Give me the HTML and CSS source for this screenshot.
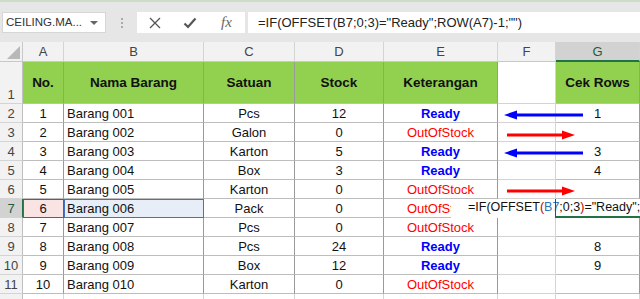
FILE: index.html
```html
<!DOCTYPE html>
<html lang="id">
<head>
  <meta charset="UTF-8">
  <title>Cek Rows</title>
  <link rel="stylesheet" href="styles.css">
</head>
<body>
  <div class="toolbar">
    <div class="namebox">CEILING.MA...<span class="caret"></span></div>
    <div class="grip"><i></i><i></i><i></i></div>
    <div class="fbtns">
      <svg class="ico-x" width="12" height="12" viewBox="0 0 12 12"><path d="M1 1L11 11M11 1L1 11" stroke="#555" stroke-width="1.3" fill="none"/></svg>
      <svg class="ico-ok" width="14" height="12" viewBox="0 0 14 12"><path d="M1.5 6.5L5 10L12.5 1.5" stroke="#555" stroke-width="2.2" fill="none"/></svg>
      <span class="fx">fx</span>
    </div>
    <div class="finput">=IF(OFFSET(B7;0;3)="Ready";ROW(A7)-1;"")</div>
  </div>

  <div class="sheet">
    <div class="corner"></div>
    <div class="ch">A</div><div class="ch">B</div><div class="ch">C</div><div class="ch">D</div>
    <div class="ch">E</div><div class="ch">F</div><div class="ch active-col">G</div>

    <div class="rh">1</div>
    <div class="cell t g">No.</div><div class="cell t g">Nama Barang</div><div class="cell t g">Satuan</div>
    <div class="cell t g">Stock</div><div class="cell t g">Keterangan</div><div class="cell"></div><div class="cell t g">Cek Rows</div>

    <div class="rh">2</div>
    <div class="cell t">1</div><div class="cell t left">Barang 001</div><div class="cell t">Pcs</div>
    <div class="cell t">12</div><div class="cell t ready">Ready</div><div class="cell"></div><div class="cell t">1</div>

    <div class="rh">3</div>
    <div class="cell t">2</div><div class="cell t left">Barang 002</div><div class="cell t">Galon</div>
    <div class="cell t">0</div><div class="cell t out">OutOfStock</div><div class="cell"></div><div class="cell t"></div>

    <div class="rh">4</div>
    <div class="cell t">3</div><div class="cell t left">Barang 003</div><div class="cell t">Karton</div>
    <div class="cell t">5</div><div class="cell t ready">Ready</div><div class="cell"></div><div class="cell t">3</div>

    <div class="rh">5</div>
    <div class="cell t">4</div><div class="cell t left">Barang 004</div><div class="cell t">Box</div>
    <div class="cell t">3</div><div class="cell t ready">Ready</div><div class="cell"></div><div class="cell t">4</div>

    <div class="rh">6</div>
    <div class="cell t">5</div><div class="cell t left">Barang 005</div><div class="cell t">Karton</div>
    <div class="cell t">0</div><div class="cell t out">OutOfStock</div><div class="cell"></div><div class="cell t"></div>

    <div class="rh active-row">7</div>
    <div class="cell t ref-a">6</div><div class="cell t left ref-b">Barang 006</div><div class="cell t">Pack</div>
    <div class="cell t">0</div><div class="cell t out">OutOfStock</div><div class="cell"></div><div class="cell t"></div>

    <div class="rh">8</div>
    <div class="cell t">7</div><div class="cell t left">Barang 007</div><div class="cell t">Pcs</div>
    <div class="cell t">0</div><div class="cell t out">OutOfStock</div><div class="cell"></div><div class="cell t"></div>

    <div class="rh">9</div>
    <div class="cell t">8</div><div class="cell t left">Barang 008</div><div class="cell t">Pcs</div>
    <div class="cell t">24</div><div class="cell t ready">Ready</div><div class="cell"></div><div class="cell t">8</div>

    <div class="rh">10</div>
    <div class="cell t">9</div><div class="cell t left">Barang 009</div><div class="cell t">Box</div>
    <div class="cell t">12</div><div class="cell t ready">Ready</div><div class="cell"></div><div class="cell t">9</div>

    <div class="rh">11</div>
    <div class="cell t">10</div><div class="cell t left">Barang 010</div><div class="cell t">Karton</div>
    <div class="cell t">0</div><div class="cell t out">OutOfStock</div><div class="cell"></div><div class="cell t"></div>

    <div class="rh"></div>
    <div class="cell"></div><div class="cell"></div><div class="cell"></div>
    <div class="cell"></div><div class="cell"></div><div class="cell"></div><div class="cell"></div>

    <!-- arrows drawn over column F -->
    <svg class="arrow arrow-r2" width="80" height="12" viewBox="0 0 80 12"><path d="M10 6H79" stroke="#0000ff" stroke-width="3"/><path d="M0 6L13 1.5V10.5Z" fill="#0000ff"/></svg>
    <svg class="arrow arrow-r3" width="68" height="12" viewBox="0 0 68 12"><path d="M0 6H58" stroke="#ff0000" stroke-width="3"/><path d="M68 6L55 1.5V10.5Z" fill="#ff0000"/></svg>
    <svg class="arrow arrow-r4" width="80" height="12" viewBox="0 0 80 12"><path d="M10 6H79" stroke="#0000ff" stroke-width="3"/><path d="M0 6L13 1.5V10.5Z" fill="#0000ff"/></svg>
    <svg class="arrow arrow-r6" width="68" height="12" viewBox="0 0 68 12"><path d="M0 6H58" stroke="#ff0000" stroke-width="3"/><path d="M68 6L55 1.5V10.5Z" fill="#ff0000"/></svg>

    <!-- cell G7 in edit mode -->
    <div class="edit">=IF(OFFSET<span class="paren">(</span><span class="ref">B7</span>;0;3<span class="paren">)</span>="Ready";</div>
  </div>
</body>
</html>
```

FILE: styles.css
```css
body {
  margin: 0;
  width: 640px;
  height: 299px;
  overflow: hidden;
  background: #ffffff;
  font-family: "Liberation Sans", Arial, sans-serif;
  color: #111;
}

/* formula bar */
.toolbar {
  height: 42px;
  box-sizing: border-box;
  background: #e6e6e6;
  border-top: 2px solid #cddbc9;
  padding-top: 10px;
  display: flex;
  align-items: flex-start;
}
.namebox {
  position: relative;
  margin-left: 2px;
  width: 104px;
  height: 21px;
  box-sizing: border-box;
  background: #fff;
  border: 1px solid #d6d6d6;
  padding-left: 3px;
  font-size: 11.5px;
  line-height: 19px;
  color: #333;
}
.caret {
  position: absolute;
  right: 7px;
  top: 8px;
  border-left: 4px solid transparent;
  border-right: 4px solid transparent;
  border-top: 4px solid #666;
}
.grip {
  width: 31px;
  height: 21px;
  display: flex;
  flex-direction: column;
  align-items: center;
  justify-content: center;
  gap: 2px;
}
.grip i {
  width: 2px;
  height: 2px;
  background: #aaa;
}
.fbtns {
  width: 108px;
  height: 21px;
  background: #fff;
  display: flex;
  align-items: center;
  padding-left: 12px;
  box-sizing: border-box;
}
.ico-ok {
  margin-left: 22px;
}
.fx {
  margin-left: 24px;
  font-family: "Liberation Serif", serif;
  font-style: italic;
  font-size: 15px;
  color: #666;
}
.finput {
  flex: 1;
  margin-left: 3px;
  height: 21px;
  background: #fff;
  padding-left: 10px;
  font-size: 13px;
  line-height: 21px;
  color: #222;
  white-space: nowrap;
  overflow: hidden;
}

/* sheet grid */
.sheet {
  position: relative;
  display: grid;
  grid-template-columns: 23px 41px 140px 91px 89px 114px 58px 84px;
  grid-template-rows: 20px 42px repeat(11, 19px);
}
.corner {
  position: relative;
  background: #f2f2f2;
  border-right: 1px solid #c8c8c8;
  border-bottom: 1px solid #c8c8c8;
}
.corner::after {
  content: "";
  position: absolute;
  right: 2px;
  bottom: 2px;
  border-left: 13px solid transparent;
  border-bottom: 13px solid #b8b8b8;
}
.ch {
  background: #f2f2f2;
  border-right: 1px solid #d4d4d4;
  border-bottom: 1px solid #c8c8c8;
  box-sizing: border-box;
  display: flex;
  align-items: center;
  justify-content: center;
  font-size: 13px;
  color: #444;
}
.active-col {
  background: #d2d2d2;
  border-bottom: 2px solid #217346;
  color: #1e5c3a;
}
.rh {
  background: #f2f2f2;
  border-right: 1px solid #c0c0c0;
  border-bottom: 1px solid #d4d4d4;
  box-sizing: border-box;
  display: flex;
  align-items: flex-end;
  justify-content: center;
  font-size: 13px;
  line-height: 15px;
  padding-bottom: 1px;
  color: #444;
}
.active-row {
  background: #d2d2d2;
  border-right: 1px solid #217346;
  color: #1e5c3a;
}
.cell {
  box-sizing: border-box;
  border-right: 1px solid #d4d4d4;
  border-bottom: 1px solid #d4d4d4;
  display: flex;
  align-items: flex-end;
  justify-content: center;
  font-size: 13px;
  line-height: 15px;
  padding-bottom: 1px;
  white-space: nowrap;
  overflow: hidden;
}
.t {
  border-right-color: #9a9a9a;
  border-bottom-color: #bdbdbd;
}
.g {
  background: #92d050;
  align-items: center;
  padding-bottom: 0;
  font-weight: bold;
  font-size: 13.5px;
  color: #111;
}
.left {
  justify-content: flex-start;
  padding-left: 3px;
}
.ready {
  color: #0000ff;
  font-weight: bold;
}
.out {
  color: #ff0000;
}
.ref-a {
  background: #f9e3e3;
  outline: 1px solid #c0392b;
  outline-offset: -1px;
}
.ref-b {
  background: #e8eef8;
  outline: 1px solid #4472c4;
  outline-offset: -1px;
}

/* overlays */
.arrow {
  position: absolute;
}
.arrow-r2 { left: 504px; top: 67px; }
.arrow-r3 { left: 507px; top: 87px; }
.arrow-r4 { left: 504px; top: 105px; }
.arrow-r6 { left: 507px; top: 143px; }

.edit {
  position: absolute;
  left: 451px;
  top: 157px;
  width: 189px;
  height: 19px;
  box-sizing: border-box;
  background: #fff;
  padding-left: 17px;
  font-size: 12.5px;
  line-height: 17px;
  white-space: nowrap;
  overflow: hidden;
  color: #111;
}
.edit::after {
  content: "";
  position: absolute;
  left: 104px;
  top: 0;
  right: 0;
  bottom: 0;
  border-left: 1px solid #1e5c3a;
  border-bottom: 2px solid #217346;
}
.edit .paren {
  color: #c00000;
}
.edit .ref {
  color: #2f75b5;
}
```
